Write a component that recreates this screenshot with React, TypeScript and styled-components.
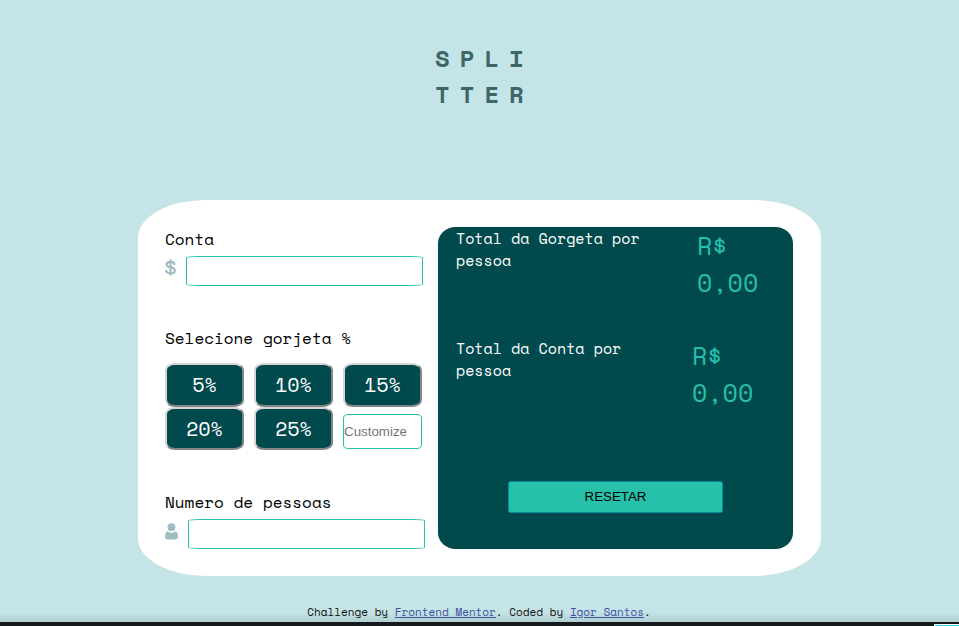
import React from "react";
import styled, { createGlobalStyle } from "styled-components";

const GlobalStyle = createGlobalStyle`
  * { box-sizing: border-box; }
  body {
    margin: 0;
    background: #c5e4e7;
    font-family: "Space Mono", "Liberation Mono", monospace;
    font-size: 16px;
    overflow: hidden;
  }
`;

const Page = styled.div`
  height: 626px;
  display: flex;
  flex-direction: column;
  align-items: center;
`;

const Title = styled.h1`
  margin: 40px 0 0 8px;
  width: 106px;
  height: 160px;
  padding-left: 4.5px;
  font-size: 24px;
  line-height: 36px;
  font-weight: 700;
  letter-spacing: 10px;
  color: #3d6666;
`;

const Card = styled.main`
  width: 683px;
  height: 376px;
  flex: none;
  padding: 27px 28px 27px 27px;
  display: flex;
  gap: 11px;
  background: #fff;
  border-radius: 10%;
`;

const Form = styled.section`
  width: 262px;
  display: flex;
  flex-direction: column;
`;

const Label = styled.label<{ $space: number }>`
  height: 24px;
  margin-bottom: ${(p) => p.$space}px;
  line-height: 24px;
  white-space: nowrap;
  color: #000;
`;

const Field = styled.div<{ $gap: number; $after: number }>`
  display: flex;
  gap: ${(p) => p.$gap}px;
  margin-bottom: ${(p) => p.$after}px;
`;

const DollarIcon = styled.svg`
  width: 11px;
  height: 17px;
  margin-top: 3px;
  fill: none;
  stroke: #9fbcc0;
  stroke-width: 2.1;
`;

const PersonIcon = styled.svg`
  width: 13px;
  height: 17px;
  margin-top: 4px;
  fill: #9fbcc0;
`;

const Input = styled.input`
  width: 237px;
  height: 30px;
  flex: none;
  padding: 0;
  border: 1px solid #26c0ab;
  border-radius: 5%;
  background: #fff;
  outline: none;
`;

const TipGrid = styled.div`
  display: grid;
  grid-template-columns: repeat(3, 79px);
  grid-template-rows: 44px 43px;
  column-gap: 10px;
  height: 127px;
`;

const TipButton = styled.button`
  padding: 0 0 1px;
  border: 2px solid;
  border-color: #d5d5d5 #858585 #858585 #d5d5d5;
  border-radius: 10px / 7px;
  background: #00494d;
  color: #fff;
  font-family: inherit;
  font-size: 20px;
`;

const CustomTip = styled(Input)`
  width: 79px;
  height: 35px;
  margin-top: 7px;
  border-radius: 5px / 4px;
  font: 13.333px "Liberation Sans", Arial, sans-serif;
  &::placeholder { color: #757575; opacity: 1; }
`;

const Results = styled.section`
  width: 355px;
  height: 322px;
  flex: none;
  padding: 0 18px;
  display: flex;
  flex-direction: column;
  border-radius: 5%;
  background: #00494d;
`;

const ResultRow = styled.div<{ $height: number; $gap: number }>`
  display: flex;
  gap: ${(p) => p.$gap}px;
  height: ${(p) => p.$height}px;
`;

const ResultLabel = styled.p`
  width: 190px;
  margin: 0;
  font-size: 15px;
  line-height: 22px;
  color: #fff;
`;

const Amount = styled.p`
  width: 66px;
  margin: 0;
  font-size: 25px;
  line-height: 37px;
  color: #26c0ab;
`;

const Reset = styled.button`
  width: 215px;
  height: 32px;
  margin-left: 52px;
  padding: 0 0 2px;
  border: 1px solid #008c9b;
  border-radius: 4px / 2px;
  background: #26c0ab;
  color: #000;
  font: 13.333px "Liberation Sans", Arial, sans-serif;
`;

const Footer = styled.footer`
  width: 100%;
  flex: 1;
  padding: 28px 1px 0 0;
  text-align: center;
  font-size: 11px;
  line-height: 16px;
  color: #111;
  background: linear-gradient(to bottom, transparent 36px, rgba(0, 30, 30, 0.1) 46px);
`;

const Link = styled.a`
  color: #3e52a3;
`;

const BottomBar = styled.div`
  width: 100%;
  height: 4px;
  flex: none;
  display: flex;
  justify-content: flex-end;
  align-items: flex-end;
  background: #14191c;
`;

const BarThumb = styled.div`
  width: 25px;
  height: 2px;
  border-top: 1px solid #fff;
  border-left: 1px solid #fff;
  background: #27d3ee;
`;

export default function App() {
  return (
    <Page>
      <GlobalStyle />
      <Title>SPLI<br />TTER</Title>
      <Card>
        <Form>
          <Label $space={5}>Conta</Label>
          <Field $gap={10} $after={40}>
            <DollarIcon viewBox="0 0 11 17">
              <path d="M9.6 5.9C9.4 3.9 7.8 2.9 5.5 2.9 3.1 2.9 1.6 3.9 1.6 5.6c0 1.7 1.3 2.3 3.9 2.8 2.8.5 4.3 1.2 4.3 3 0 1.9-1.7 2.9-4.2 2.9-2.8 0-4.4-1.2-4.5-3.3M5.5.4v16.2" />
            </DollarIcon>
            <Input aria-label="Conta" />
          </Field>
          <Label $space={13}>Selecione gorjeta %</Label>
          <TipGrid>
            {[5, 10, 15, 20, 25].map((tip) => (
              <TipButton key={tip}>{tip}%</TipButton>
            ))}
            <CustomTip placeholder="Customize" />
          </TipGrid>
          <Label $space={5}>Numero de pessoas</Label>
          <Field $gap={10} $after={0}>
            <PersonIcon viewBox="0 0 13 17">
              <circle cx="6.5" cy="4.2" r="3.9" />
              <path d="M2.7 8.2C1 8.5 0 10.7 0 13.4 0 15.5 1 16.4 2.7 16.4h7.6c1.7 0 2.7-.9 2.7-3 0-2.7-1-4.9-2.7-5.2A5.5 5.5 0 0 1 2.7 8.2Z" />
            </PersonIcon>
            <Input aria-label="Numero de pessoas" />
          </Field>
        </Form>
        <Results>
          <ResultRow $height={110} $gap={51}>
            <ResultLabel>Total da Gorgeta por pessoa</ResultLabel>
            <Amount>R$ 0,00</Amount>
          </ResultRow>
          <ResultRow $height={144} $gap={46}>
            <ResultLabel>Total da Conta por pessoa</ResultLabel>
            <Amount>R$ 0,00</Amount>
          </ResultRow>
          <Reset>RESETAR</Reset>
        </Results>
      </Card>
      <Footer>
        Challenge by <Link href="#">Frontend Mentor</Link>. Coded by <Link href="#">Igor Santos</Link>.
      </Footer>
      <BottomBar>
        <BarThumb />
      </BottomBar>
    </Page>
  );
}
